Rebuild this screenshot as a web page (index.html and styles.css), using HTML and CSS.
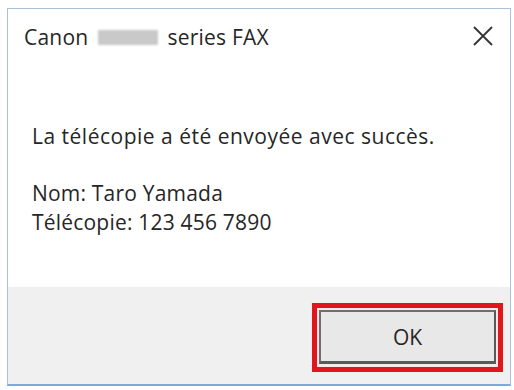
FILE: index.html
```html
<!DOCTYPE html>
<html lang="fr">
<head>
<meta charset="utf-8">
<link rel="stylesheet" href="styles.css">
</head>
<body>
<div class="dialog">
  <div class="titlebar">
    <div class="title">Canon <span class="redacted"></span> series FAX</div>
    <svg class="close" width="20" height="20" viewBox="0 0 20 20"><path d="M1 1 L19 19 M19 1 L1 19" stroke="#333" stroke-width="1.8" fill="none"/></svg>
  </div>
  <div class="content">
    <p class="msg">La télécopie a été envoyée avec succès.</p>
    <p class="details">Nom: Taro Yamada<br>Télécopie: 123 456 7890</p>
  </div>
  <div class="footer">
    <div class="highlight">
      <div class="ok">OK</div>
    </div>
  </div>
</div>
</body>
</html>
```
FILE: styles.css
```css
html, body {
  margin: 0;
  padding: 0;
  background: #ffffff;
}
body {
  padding: 8px 0 0 7px;
  font-family: "Open Sans", "Noto Sans", sans-serif;
  color: #262626;
}
.dialog {
  width: 502px;
  height: 375px;
  border: 1px solid #a9c2dc;
  border-bottom: 2px solid #7fa9d8;
  display: flex;
  flex-direction: column;
  background: #fff;
}
.titlebar {
  height: 56px;
  display: flex;
  align-items: center;
  justify-content: space-between;
  padding: 0 17px 0 16px;
  font-size: 21px;
  letter-spacing: 0.2px;
}
.title {
  display: flex;
  align-items: center;
  white-space: pre;
}
.redacted {
  display: inline-block;
  width: 60px;
  height: 15px;
  background: #c9c9c9;
  margin: 0 4px 0 4px;
  filter: blur(1px);
}
.close {
  margin-top: -2px;
}
.content {
  flex: 1;
  padding: 0 0 0 24px;
  font-size: 21px;
  line-height: 28.5px;
  letter-spacing: 0.5px;
}
.msg {
  margin: 57px 0 0 0;
}
.details {
  margin: 28.5px 0 0 0;
  letter-spacing: 0.2px;
}
.footer {
  height: 97px;
  background: #f0f0f0;
  display: flex;
  justify-content: flex-end;
  align-items: flex-start;
  padding: 16px 7px 0 0;
  box-sizing: border-box;
}
.highlight {
  border: 5px solid #e0161c;
  padding: 2px 2px 3px 2px;
  background: #fbe9e9;
}
.ok {
  width: 173px;
  height: 49px;
  border: 2px solid #6f6f6f;
  border-right-color: #5a5a5a;
  border-bottom: 3px solid #5a5a5a;
  background: #e8e8e8;
  display: flex;
  align-items: center;
  justify-content: center;
  font-size: 21px;
  color: #262626;
}
```
